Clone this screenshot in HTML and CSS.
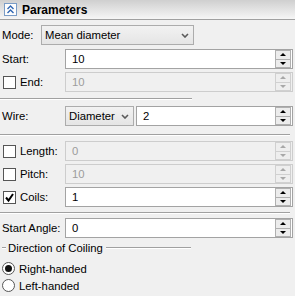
FILE: index.html
```html
<!DOCTYPE html>
<html>
<head>
<meta charset="utf-8" />
<title>Parameters</title>
<link rel="stylesheet" href="styles.css">
</head>
<body>
<div class="panel">
	<div class="header">
		<span class="collapse">
			<svg width="11" height="11" viewBox="0 0 11 11">
				<polyline points="2.5,5 5.5,2 8.5,5" fill="none" stroke="#2f66b3" stroke-width="1.4"/>
				<polyline points="2.5,9 5.5,6 8.5,9" fill="none" stroke="#2f66b3" stroke-width="1.4"/>
			</svg>
		</span>
		<span class="title">Parameters</span>
	</div>

	<div class="content">
		<div class="row r-mode">
			<span class="label label-short">Mode:</span>
			<div class="select select-mode">
				<span>Mean diameter</span>
				<svg class="chev" width="8" height="5" viewBox="0 0 8 5"><polyline points="1,1 4,4 7,1" fill="none" stroke="#5a5a5a" stroke-width="1.6"/></svg>
			</div>
		</div>

		<div class="row r-start">
			<span class="label">Start:</span>
			<div class="field">
				<span class="value">10</span>
				<span class="spin"><span class="up"></span><span class="down"></span></span>
			</div>
		</div>

		<div class="row r-end">
			<span class="label"><span class="check"></span>End:</span>
			<div class="field disabled">
				<span class="value">10</span>
				<span class="spin"><span class="up"></span><span class="down"></span></span>
			</div>
		</div>

		<div class="sep sep-short s1"></div>

		<div class="row r-wire">
			<span class="label">Wire:</span>
			<div class="select select-wire">
				<span>Diameter</span>
				<svg class="chev" width="8" height="5" viewBox="0 0 8 5"><polyline points="1,1 4,4 7,1" fill="none" stroke="#5a5a5a" stroke-width="1.6"/></svg>
			</div>
			<div class="field">
				<span class="value">2</span>
				<span class="spin"><span class="up"></span><span class="down"></span></span>
			</div>
		</div>

		<div class="sep s2"></div>

		<div class="row r-length">
			<span class="label"><span class="check"></span>Length:</span>
			<div class="field disabled">
				<span class="value">0</span>
				<span class="spin"><span class="up"></span><span class="down"></span></span>
			</div>
		</div>

		<div class="row r-pitch">
			<span class="label"><span class="check"></span>Pitch:</span>
			<div class="field disabled">
				<span class="value">10</span>
				<span class="spin"><span class="up"></span><span class="down"></span></span>
			</div>
		</div>

		<div class="row r-coils">
			<span class="label"><span class="check checked">
				<svg width="11" height="11" viewBox="0 0 11 11"><polyline points="2,5.5 4.5,8.5 9,2" fill="none" stroke="#000" stroke-width="2"/></svg>
			</span>Coils:</span>
			<div class="field">
				<span class="value">1</span>
				<span class="spin"><span class="up"></span><span class="down"></span></span>
			</div>
		</div>

		<div class="sep s3"></div>

		<div class="row r-angle">
			<span class="label">Start Angle:</span>
			<div class="field">
				<span class="value">0</span>
				<span class="spin"><span class="up"></span><span class="down"></span></span>
			</div>
		</div>

		<div class="group-title"><span>Direction of Coiling</span></div>

		<div class="radio-row r-right"><span class="radio on"></span>Right-handed</div>
		<div class="radio-row r-left"><span class="radio"></span>Left-handed</div>
	</div>
</div>
</body>
</html>
```

FILE: styles.css
```css
body{
	margin: 0;
	background: #f0f0f0;
	font-family: "Liberation Sans", Arial, sans-serif;
	font-size: 11.3px;
	color: #000;
}

.header{
	height: 19px;
	border-bottom: 1px solid #a0a0a0;
	background: linear-gradient(to bottom, #cfcfcf, #f6f6f6);
	display: flex;
	align-items: center;
	padding-left: 4px;
}

.collapse{
	width: 11px;
	height: 11px;
	border: 1px solid #7a9cc6;
	background: #fdfdfd;
	display: flex;
}

.title{
	margin-left: 5px;
	font-weight: bold;
	font-size: 12px;
}

.content{
	padding: 5px 2px 0 2px;
	display: flex;
	flex-direction: column;
}

.row{
	display: flex;
	align-items: center;
	height: 20px;
}

.label{
	width: 63px;
	flex: none;
	display: flex;
	align-items: center;
}

.label-short{
	width: 39px;
}

.r-start{ margin-top: 4px; }
.r-end{ margin-top: 3px; }
.r-wire{ margin-top: 6px; }
.r-length{ margin-top: 5px; }
.r-pitch{ margin-top: 3px; }
.r-coils{ margin-top: 3px; }
.r-angle{ margin-top: 4px; }

/* dropdowns */
.select{
	box-sizing: border-box;
	height: 20px;
	border: 1px solid #acacac;
	background: linear-gradient(to bottom, #f2f2f2, #e5e5e5);
	display: flex;
	align-items: center;
	justify-content: space-between;
	padding: 0 4px 0 3px;
}

.select-mode{
	width: 153px;
}

.select-wire{
	width: 69px;
	margin-right: 2px;
}

/* spin fields */
.field{
	flex: 1;
	box-sizing: border-box;
	height: 20px;
	border: 1px solid #a3a3a3;
	background: #fff;
	display: flex;
	align-items: center;
}

.field .value{
	flex: 1;
	padding-left: 6px;
}

.field.disabled{
	background: #f0f0f0;
	border-color: #cdcdcd;
	color: #9c9c9c;
}

.spin{
	width: 14px;
	height: 16px;
	margin-right: 1px;
	border: 1px solid #b0b0b0;
	background: #ececec;
	display: flex;
	flex-direction: column;
}

.spin .up,
.spin .down{
	flex: 1;
	position: relative;
}

.spin .up{
	border-bottom: 1px solid #b0b0b0;
}

.spin .up::after,
.spin .down::after{
	content: "";
	position: absolute;
	left: 4px;
	width: 0;
	height: 0;
	border-left: 3px solid transparent;
	border-right: 3px solid transparent;
}

.spin .up::after{
	top: 2px;
	border-bottom: 3px solid #000;
}

.spin .down::after{
	top: 2px;
	border-top: 3px solid #000;
}

.disabled .spin{
	border-color: #d0d0d0;
	background: #eeeeee;
}

.disabled .spin .up{
	border-bottom-color: #d0d0d0;
}

.disabled .spin .up::after{
	border-bottom-color: #a8a8a8;
}

.disabled .spin .down::after{
	border-top-color: #a8a8a8;
}

/* checkboxes and radios */
.check{
	box-sizing: border-box;
	width: 13px;
	height: 13px;
	border: 1px solid #555;
	background: #fff;
	margin: 0 4px 0 1px;
	display: flex;
	align-items: center;
	justify-content: center;
}

.radio-row{
	display: flex;
	align-items: center;
	height: 17px;
}

.r-right{ margin-top: 5px; }

.radio{
	box-sizing: border-box;
	width: 13px;
	height: 13px;
	border: 1px solid #555;
	border-radius: 50%;
	background: #fff;
	margin: 0 4px 0 0;
	display: flex;
	align-items: center;
	justify-content: center;
}

.radio.on::after{
	content: "";
	width: 7px;
	height: 7px;
	border-radius: 50%;
	background: #111;
}

/* separators */
.sep{
	border-top: 1px solid #a0a0a0;
	border-bottom: 1px solid #fff;
	margin-left: -2px;
	width: 290px;
}

.sep-short{
	width: 192px;
}

.s1{ margin-top: 6px; }
.s2{ margin-top: 8px; }
.s3{ margin-top: 5px; }

.group-title{
	margin-top: 3px;
	width: 189px;
	height: 14px;
	display: flex;
	align-items: center;
}

.group-title::before,
.group-title::after{
	content: "";
	height: 0;
	border-top: 1px solid #a0a0a0;
	border-bottom: 1px solid #fff;
}

.group-title::before{
	width: 4px;
	margin-right: 2px;
}

.group-title::after{
	flex: 1;
	margin-left: 3px;
}
```
